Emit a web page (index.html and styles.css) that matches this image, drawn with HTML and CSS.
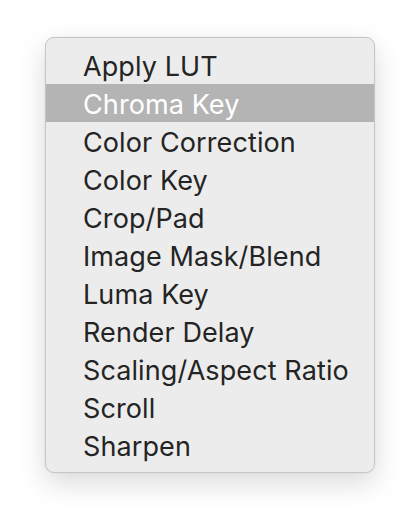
FILE: index.html
```html
<!DOCTYPE html>
<html>
<head>
<meta charset="utf-8">
<link rel="stylesheet" href="styles.css">
</head>
<body>
<div class="menu">
  <div class="item">Apply LUT</div>
  <div class="item selected">Chroma Key</div>
  <div class="item">Color Correction</div>
  <div class="item">Color Key</div>
  <div class="item">Crop/Pad</div>
  <div class="item">Image Mask/Blend</div>
  <div class="item">Luma Key</div>
  <div class="item">Render Delay</div>
  <div class="item">Scaling/Aspect Ratio</div>
  <div class="item">Scroll</div>
  <div class="item">Sharpen</div>
</div>
</body>
</html>
```
FILE: styles.css
```css
html, body {
  margin: 0;
  padding: 0;
  background: #ffffff;
}
body {
  width: 420px;
  height: 526px;
  overflow: hidden;
}
.menu {
  box-sizing: border-box;
  margin: 37px 0 0 45px;
  width: 330px;
  padding: 8px 0 8px 0;
  background: #ececec;
  border: 1px solid #c6c6c6;
  border-radius: 9px;
  box-shadow: 0 10px 28px rgba(0, 0, 0, 0.15), 0 0 2px rgba(0,0,0,0.08);
  font-family: Inter, "Helvetica Neue", Arial, sans-serif;
  font-size: 27px;
  letter-spacing: 0.1px;
  color: #242424;
}
.item {
  height: 35px;
  line-height: 35px;
  padding-top: 3px;
  padding-left: 37px;
  white-space: nowrap;
}
.selected {
  background: #b4b4b4;
  color: #ffffff;
}
```
